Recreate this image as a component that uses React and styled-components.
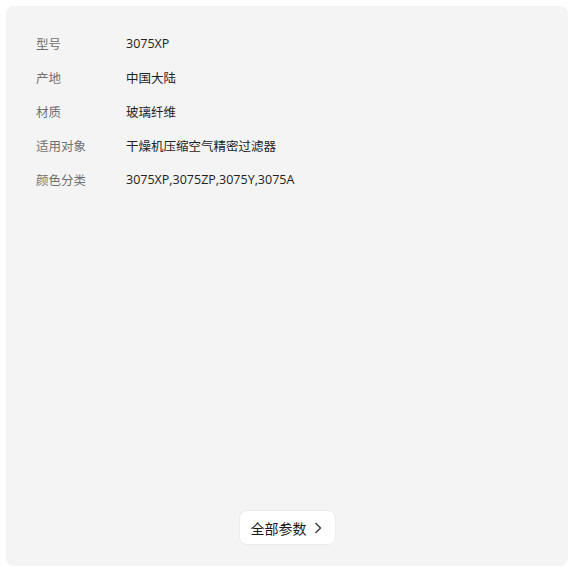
import React from 'react';
import styled, { createGlobalStyle } from 'styled-components';

const GlobalStyle = createGlobalStyle`
  html, body {
    margin: 0;
    padding: 0;
    background: #ffffff;
  }
  body {
    font-family: "Open Sans", "Noto Sans CJK SC", sans-serif;
  }
`;

const Panel = styled.div`
  margin: 6px;
  width: 562px;
  height: 560px;
  box-sizing: border-box;
  background: #f4f4f4;
  border-radius: 8px;
  padding: 20px 30px 21px 30px;
  display: flex;
  flex-direction: column;
`;

const ParamList = styled.div`
  display: flex;
  flex-direction: column;
  flex: 1;
`;

const ParamRow = styled.div`
  display: flex;
  align-items: center;
  height: 34px;
  font-size: 12.5px;
`;

const Label = styled.span`
  width: 90px;
  color: #707070;
`;

const Value = styled.span`
  color: #222222;
`;

const Footer = styled.div`
  display: flex;
  justify-content: center;
`;

const AllButton = styled.button`
  display: flex;
  align-items: center;
  gap: 7px;
  height: 35px;
  padding: 0 13px 0 11px;
  background: #ffffff;
  border: 1px solid #ececec;
  border-radius: 8px;
  font-family: inherit;
  font-size: 14px;
  color: #1a1a1a;
  cursor: pointer;
`;

const params = [
  ['型号', '3075XP'],
  ['产地', '中国大陆'],
  ['材质', '玻璃纤维'],
  ['适用对象', '干燥机压缩空气精密过滤器'],
  ['颜色分类', '3075XP,3075ZP,3075Y,3075A'],
];

const App = () => (
  <>
    <GlobalStyle />
    <Panel>
      <ParamList>
        {params.map(([k, v]) => (
          <ParamRow key={k}>
            <Label>{k}</Label>
            <Value>{v}</Value>
          </ParamRow>
        ))}
      </ParamList>
      <Footer>
        <AllButton>
          全部参数
          <svg width="8" height="12" viewBox="0 0 8 12" fill="none">
            <path d="M1.5 1 L6.5 6 L1.5 11" stroke="#333" strokeWidth="1.3" />
          </svg>
        </AllButton>
      </Footer>
    </Panel>
  </>
);

export default App;
